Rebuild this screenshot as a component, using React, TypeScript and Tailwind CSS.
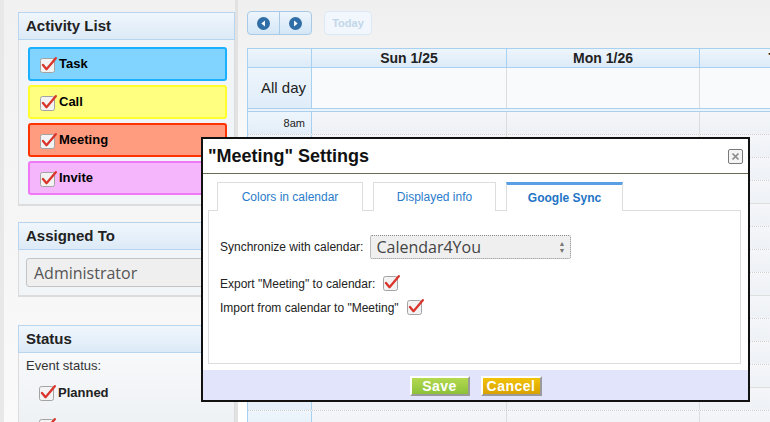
import React from "react"

function Check({ className = "" }: { className?: string }) {
  return (
    <svg width="17" height="17" viewBox="0 0 17 17" className={className}>
      <rect x="0.5" y="2.5" width="14" height="14" rx="2" fill="#f3f3f3" stroke="#a3a3a3" />
      <path d="M3 9 L6.5 13.2 L15.8 2.2" fill="none" stroke="#d9352c" strokeWidth="2.3" strokeLinecap="round" strokeLinejoin="round" />
    </svg>
  )
}

function PanelHeader({ title }: { title: string }) {
  return (
    <div className="h-[28px] border border-[#b7d5ef] bg-gradient-to-b from-[#f0f6fc] to-[#dceaf7] pl-[7px] flex items-center text-[15px] font-bold text-[#222]">
      {title}
    </div>
  )
}

const activities = [
  { name: "Task", cls: "bg-[#80d4ff] border-[#19b0ff]" },
  { name: "Call", cls: "bg-[#ffff80] border-[#ffff2e]" },
  { name: "Meeting", cls: "bg-[#ff9c7f] border-[#ff3300]" },
  { name: "Invite", cls: "bg-[#f5b6fb] border-[#ef78f6]" },
]

function NavCircle({ dir }: { dir: "l" | "r" }) {
  return (
    <svg width="13" height="13" viewBox="0 0 12 12">
      <circle cx="6" cy="6" r="6" fill="#2f6ea6" />
      {dir === "l" ? <path d="M7.3 3.2 L4 6 L7.3 8.8 Z" fill="#fff" /> : <path d="M4.7 3.2 L8 6 L4.7 8.8 Z" fill="#fff" />}
    </svg>
  )
}

const days = [
  { label: "Sun 1/25", w: "w-[195px]" },
  { label: "Mon 1/26", w: "w-[193px]" },
  { label: "Tue 1/27", w: "w-[193px]" },
]

const slots = Array.from({ length: 14 }, (_, i) => i)

export default function App() {
  return (
    <div className="w-[770px] h-[422px] overflow-hidden relative flex bg-white font-['Liberation_Sans',Arial,sans-serif] text-[#222]">
      {/* Sidebar */}
      <div className="w-[238px] shrink-0 h-full border-l-[4px] border-l-[#e8e8e8] border-r-[3px] border-r-[#e2e2e2] bg-gradient-to-b from-[#f1f1f1] to-[#fafafa] pt-[12px] pl-[14px] flex flex-col">
        {/* Activity list */}
        <div>
          <PanelHeader title="Activity List" />
          <div className="h-[166px] bg-[#f2f5f8] border-x border-b-[2px] border-[#dcdcdc] pt-[7px] pl-[9px] flex flex-col gap-[4px]">
            {activities.map((a) => (
              <div key={a.name} className={`w-[199px] h-[34px] border-2 rounded-[3px] flex items-center pl-[10px] gap-[2px] ${a.cls}`}>
                <Check />
                <span className="text-[13px] font-bold text-black">{a.name}</span>
              </div>
            ))}
          </div>
        </div>

        {/* Assigned To */}
        <div className="mt-[16px]">
          <PanelHeader title="Assigned To" />
          <div className="h-[47px] bg-[#f2f5f8] border-x border-b-[2px] border-[#dcdcdc] pt-[8px] pl-[7px]">
            <div className="h-[29px] w-[210px] border border-[#c4c4c4] rounded-[3px] bg-[#efefef] flex items-center pl-[7px] font-['Open_Sans',sans-serif] text-[16px] text-[#555]">
              Administrator
            </div>
          </div>
        </div>

        {/* Status */}
        <div className="mt-[28px]">
          <PanelHeader title="Status" />
          <div className="h-[80px] bg-gradient-to-b from-[#f7f9fb] to-[#edf0f3] border-x border-[#dcdcdc] pt-[3px] pl-[7px]">
            <div className="text-[13px] text-[#333]">Event status:</div>
            <div className="flex items-center gap-[2px] mt-[7px] pl-[13px]">
              <Check />
              <span className="text-[13px] font-bold text-[#222]">Planned</span>
            </div>
            <div className="mt-[15px] pl-[13px]">
              <Check />
            </div>
          </div>
        </div>
      </div>

      {/* Calendar */}
      <div className="flex-1 h-full bg-gradient-to-b from-[#efefef] via-white to-white pl-[9px] pt-[11px]">
        <div className="flex items-center gap-[12px] h-[24px]">
          <div className="flex h-[24px] w-[65px] rounded-[4px] border border-[#a8cae6] bg-gradient-to-b from-[#eef5fc] to-[#d4e7f7] overflow-hidden">
            <div className="flex-1 flex items-center justify-center border-r border-[#a8cae6]">
              <NavCircle dir="l" />
            </div>
            <div className="flex-1 flex items-center justify-center">
              <NavCircle dir="r" />
            </div>
          </div>
          <div className="h-[24px] w-[48px] rounded-[4px] border border-[#dce9f5] bg-[#f1f7fc] flex items-center justify-center text-[11px] font-bold text-[#c2d6e9]">
            Today
          </div>
        </div>

        <div className="mt-[13px] w-[700px] border-l border-[#a8d0f0]">
          {/* Header */}
          <div className="flex h-[20px] border-y border-[#a8d0f0] bg-gradient-to-b from-[#eef5fc] to-[#dcebf8]">
            <div className="w-[64px] shrink-0 border-r border-[#a8d0f0]" />
            {days.map((d) => (
              <div key={d.label} className={`${d.w} shrink-0 border-r border-[#a8d0f0] flex items-center justify-center text-[14px] font-bold text-[#222]`}>
                {d.label}
              </div>
            ))}
          </div>
          {/* All day */}
          <div className="flex h-[41px] border-b border-[#a8d0f0]">
            <div className="w-[64px] shrink-0 border-r border-[#a8d0f0] bg-gradient-to-b from-[#eef5fc] to-[#dfedf9] flex items-center justify-end pr-[5px] text-[15px] text-[#222]">
              All day
            </div>
            {days.map((d) => (
              <div key={d.label} className={`${d.w} shrink-0 border-r border-[#dcdcdc] bg-[#f8fafc]`} />
            ))}
          </div>
          <div className="h-[3px] bg-[#eef3f8] border-b border-[#a8d0f0]" />
          {/* Slots */}
          {slots.map((i) => {
            const solid = i % 4 === 3
            return (
              <div key={i} className={`flex h-[23px] border-b ${solid ? "border-solid border-[#dedede]" : "border-dotted border-[#cfcfcf]"}`}>
                <div className="w-[64px] shrink-0 border-r border-solid border-r-[#a8d0f0] bg-gradient-to-b from-[#eef5fc] to-[#e3eef9] flex items-center justify-end pr-[6px] text-[11px] text-[#222]">
                  {i === 0 ? "8am" : ""}
                </div>
                {days.map((d) => (
                  <div key={d.label} className={`${d.w} shrink-0 border-r border-solid border-r-[#dcdcdc] bg-gradient-to-b from-[#f4f6f9] to-[#eef1f5]`} />
                ))}
              </div>
            )
          })}
        </div>
      </div>

      {/* Dialog */}
      <div className="absolute left-[201px] top-[137px] w-[549px] h-[265px] border-2 border-[#111] bg-white flex flex-col">
        <div className="h-[35px] shrink-0 border-b border-[#6a6a55] flex items-center justify-between pl-[5px] pr-[5px]">
          <span className="text-[18px] font-bold text-[#111]">"Meeting" Settings</span>
          <div className="w-[15px] h-[15px] border border-[#7a7a7a] rounded-[2px] bg-[#f4f4f4] flex items-center justify-center">
            <svg width="9" height="9" viewBox="0 0 9 9">
              <path d="M1.5 1.5 L7.5 7.5 M7.5 1.5 L1.5 7.5" stroke="#888" strokeWidth="1.6" />
            </svg>
          </div>
        </div>

        <div className="pl-[5px] pr-[7px] pt-[8px]">
          <div className="flex gap-[10px] pl-[9px] h-[29px] relative z-10">
            <div className="w-[146px] border border-b-0 border-[#dddddd] bg-white flex items-center justify-center text-[12px] text-[#2a7ccb]">
              Colors in calendar
            </div>
            <div className="w-[123px] border border-b-0 border-[#dddddd] bg-white flex items-center justify-center text-[12px] text-[#2a7ccb]">
              Displayed info
            </div>
            <div className="w-[117px] h-[29px] border-x border-[#dddddd] border-t-[3px] border-t-[#5a9fe3] bg-white flex items-center justify-center text-[12px] font-bold text-[#1f74c6]">
              Google Sync
            </div>
          </div>
          <div className="-mt-px h-[154px] border border-[#dddddd] pl-[11px] pt-[24px]">
            <div className="flex items-center gap-[7px]">
              <span className="text-[12px] text-[#222]">Synchronize with calendar:</span>
              <div className="w-[201px] h-[24px] border border-dotted border-[#8a8a8a] rounded-[2px] bg-[#efefef] flex items-center justify-between pl-[5px] pr-[5px]">
                <span className="font-['Open_Sans',sans-serif] text-[16px] text-[#444]">Calendar4You</span>
                <span className="flex flex-col leading-none text-[7px] text-[#777]">
                  <span>▲</span>
                  <span>▼</span>
                </span>
              </div>
            </div>
            <div className="flex items-center gap-[8px] mt-[16px]">
              <span className="text-[12px] text-[#222]">Export "Meeting" to calendar:</span>
              <Check className="-mt-[3px]" />
            </div>
            <div className="flex items-center gap-[8px] mt-[6px]">
              <span className="text-[12px] text-[#222]">Import from calendar to "Meeting"</span>
              <Check className="-mt-[3px]" />
            </div>
          </div>
        </div>

        <div className="mt-[6px] flex-1 bg-[#e1e4fb] flex justify-center gap-[11px] pt-[6px]">
          <div className="w-[60px] h-[20px] border-2 border-t-white border-l-white border-b-[#9a9a9a] border-r-[#9a9a9a] bg-gradient-to-b from-[#b4d94f] to-[#8cc13a] flex items-center justify-center text-[14px] font-bold tracking-[0.5px] text-white">
            Save
          </div>
          <div className="w-[61px] h-[20px] border-2 border-t-white border-l-white border-b-[#9a9a9a] border-r-[#9a9a9a] bg-gradient-to-b from-[#f1c20a] to-[#d9a200] flex items-center justify-center text-[14px] font-bold tracking-[0.5px] text-white">
            Cancel
          </div>
        </div>
      </div>
    </div>
  )
}
